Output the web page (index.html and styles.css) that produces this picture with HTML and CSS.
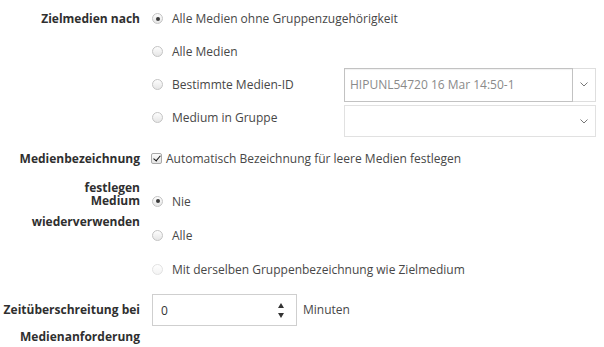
FILE: index.html
```html
<!DOCTYPE html>
<html>
  <head>
    <title>Medienoptionen</title>
    <link rel="stylesheet" href="styles.css">
  </head>
  <body>
    <div class="form">
      <div class="row row-target">
        <div class="label">Zielmedien nach</div>
        <div class="options">
          <div class="opt"><span class="radio checked"></span>Alle Medien ohne Gruppenzugehörigkeit</div>
          <div class="opt"><span class="radio"></span>Alle Medien</div>
          <div class="opt">
            <span class="radio"></span>
            <span class="opt-text">Bestimmte Medien-ID</span>
            <div class="select select-active">
              <div class="select-value">HIPUNL54720 16 Mar 14:50-1</div>
              <div class="select-arrow">
                <svg width="8" height="5" viewBox="0 0 8 5"><polyline points="0.5,0.5 4,4 7.5,0.5" fill="none" stroke="#777" stroke-width="1"/></svg>
              </div>
            </div>
          </div>
          <div class="opt">
            <span class="radio"></span>
            <span class="opt-text">Medium in Gruppe</span>
            <div class="select select-empty">
              <div class="select-value"></div>
              <div class="select-arrow">
                <svg width="8" height="5" viewBox="0 0 8 5"><polyline points="0.5,0.5 4,4 7.5,0.5" fill="none" stroke="#777" stroke-width="1"/></svg>
              </div>
            </div>
          </div>
        </div>
      </div>

      <div class="row row-name">
        <div class="label">Medienbezeichnung festlegen</div>
        <div class="options">
          <div class="opt opt-check"><span class="checkbox"></span>Automatisch Bezeichnung für leere Medien festlegen</div>
        </div>
      </div>

      <div class="row row-reuse">
        <div class="label">Medium wiederverwenden</div>
        <div class="options">
          <div class="opt"><span class="radio checked"></span>Nie</div>
          <div class="opt"><span class="radio"></span>Alle</div>
          <div class="opt"><span class="radio disabled"></span>Mit derselben Gruppenbezeichnung wie Zielmedium</div>
        </div>
      </div>

      <div class="row row-timeout">
        <div class="label">Zeitüberschreitung bei Medienanforderung</div>
        <div class="number-field">
          <div class="number-input">
            <span>0</span>
            <span class="spinner"><span class="up"></span><span class="down"></span></span>
          </div>
          <span class="unit">Minuten</span>
        </div>
      </div>
    </div>
  </body>
</html>
```

FILE: styles.css
```css
body {
  margin: 0;
  padding: 2px 0 0;
  background: #fff;
  font-family: "Open Sans", sans-serif;
  font-size: 12px;
  color: #474747;
}

.row {
  display: flex;
  gap: 12px;
}

.label {
  width: 140px;
  flex: none;
  text-align: right;
  font-weight: bold;
  color: #2f2f2f;
}

.row-target .label {
  line-height: 33px;
}

.opt {
  display: flex;
  align-items: center;
  height: 33px;
  white-space: nowrap;
}

.opt-text {
  width: 172px;
  flex: none;
}

/* radio buttons */
.radio {
  width: 11px;
  height: 11px;
  flex: none;
  box-sizing: border-box;
  border: 1px solid #c4c4c4;
  border-radius: 50%;
  background: linear-gradient(#fdfdfd, #e6e6e6);
  margin-right: 9px;
  position: relative;
}

.radio.checked::after {
  content: "";
  position: absolute;
  left: 2.5px;
  top: 2.5px;
  width: 4px;
  height: 4px;
  border-radius: 50%;
  background: #3a3a3a;
}

.radio.disabled {
  border-color: #e2e2e2;
  background: linear-gradient(#fff, #f3f3f3);
}

/* checkbox */
.checkbox {
  width: 11px;
  height: 11px;
  flex: none;
  box-sizing: border-box;
  border: 1px solid #a9a9a9;
  border-radius: 2px;
  background: linear-gradient(#fdfdfd, #e4e4e4);
  margin: 0 4px 0 -1px;
  position: relative;
}

.checkbox::after {
  content: "";
  position: absolute;
  left: 3px;
  top: 0;
  width: 3px;
  height: 6px;
  border: solid #111;
  border-width: 0 1.5px 1.5px 0;
  transform: rotate(40deg);
}

/* selects */
.select {
  display: flex;
  width: 252px;
  height: 34px;
  box-sizing: border-box;
}

.select-value {
  flex: 1;
  box-sizing: border-box;
  padding-left: 5px;
  line-height: 32px;
  color: #8a8a8a;
}

.select-arrow {
  width: 23px;
  display: flex;
  align-items: center;
  justify-content: center;
  box-sizing: border-box;
}

.select-active .select-value {
  border: 1px solid #c2c2c2;
  box-shadow: inset 0 1px 1px rgba(0, 0, 0, 0.06);
}

.select-active .select-arrow {
  border: 1px solid #dedede;
  border-left: none;
}

.select-empty {
  height: 32px;
  margin-top: 7px;
  border: 1px solid #e1e1e1;
}

/* rows below */
.row-name {
  margin-top: 10px;
  height: 40px;
}

.row-name .label {
  line-height: 29px;
}

.opt-check {
  height: 29px;
}

.row-reuse .label {
  padding-top: 6px;
  line-height: 21px;
}

.row-reuse .opt {
  height: 34px;
}

.row-timeout {
  margin-top: 8px;
}

.row-timeout .label {
  padding-top: 2px;
  line-height: 27px;
}

.number-field {
  display: flex;
  align-items: flex-start;
  gap: 6px;
}

.number-input {
  width: 145px;
  height: 32px;
  box-sizing: border-box;
  border: 1px solid #cfcfcf;
  display: flex;
  align-items: center;
  justify-content: space-between;
  padding: 0 12px 0 8px;
  color: #333;
}

.spinner {
  display: flex;
  flex-direction: column;
  gap: 5px;
}

.spinner .up,
.spinner .down {
  width: 0;
  height: 0;
  border-left: 3px solid transparent;
  border-right: 3px solid transparent;
}

.spinner .up {
  border-bottom: 5px solid #333;
}

.spinner .down {
  border-top: 5px solid #333;
}

.unit {
  line-height: 32px;
}
```
